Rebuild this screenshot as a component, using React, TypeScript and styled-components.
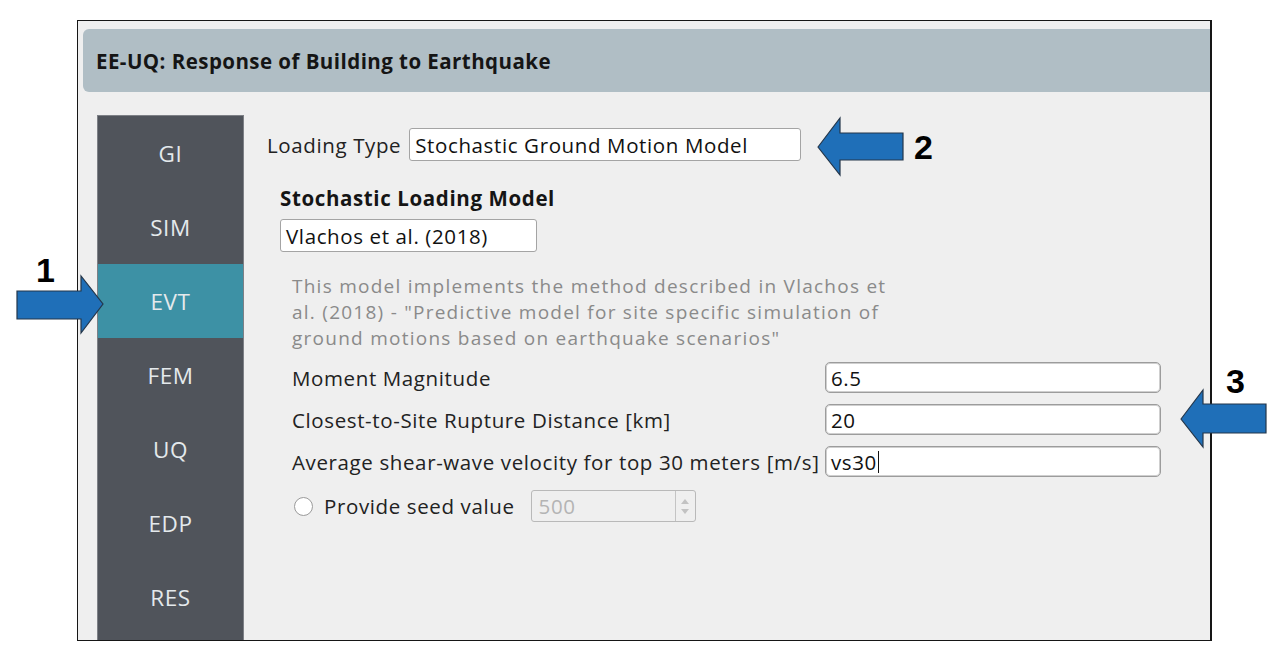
import React from "react";
import styled, { createGlobalStyle } from "styled-components";

const Global = createGlobalStyle`
  html, body { margin: 0; padding: 0; background: #ffffff; }
  body { font-family: "Open Sans", "Noto Sans", "DejaVu Sans", sans-serif; }
  * { box-sizing: border-box; }
`;

const Page = styled.div`
  position: relative;
  width: 1277px;
  height: 661px;
  padding: 20px 0 0 77px;
  overflow: hidden;
`;

const Window = styled.div`
  width: 1135px;
  height: 621px;
  border: 1px solid #161616;
  border-right-width: 2px;
  background: #efefef;
  display: flex;
  flex-direction: column;
  overflow: hidden;
`;

const TitleBar = styled.div`
  margin: 8px 0 0 5px;
  height: 63px;
  background: #b0bec5;
  border-radius: 6px 0 0 6px;
  display: flex;
  align-items: center;
  padding-left: 13px;
  font-size: 20.5px;
  font-weight: 700;
  letter-spacing: 0.45px;
  color: #151515;
`;

const Body = styled.div`
  flex: 1;
  display: flex;
  margin-top: 23px;
  min-height: 0;
`;

const SideNav = styled.nav`
  width: 147px;
  margin-left: 19px;
  background: #50545b;
  border: 1px solid #7d8086;
  border-bottom: none;
  display: flex;
  flex-direction: column;
`;

const NavItem = styled.div<{ $active?: boolean }>`
  height: 74px;
  flex: 0 0 74px;
  display: flex;
  align-items: center;
  justify-content: center;
  background: ${(p) => (p.$active ? "#3d91a5" : "transparent")};
  color: #e4e9ec;
  font-size: 22.5px;
  letter-spacing: 0.6px;
`;

const Content = styled.div`
  flex: 1;
  padding: 13px 0 0 23px;
  color: #222;
  font-size: 20.5px;
  letter-spacing: 0.62px;
`;

const LoadingRow = styled.div`
  display: flex;
  align-items: center;
  gap: 8px;
`;

const Label = styled.span`
  white-space: nowrap;
`;

const TextBox = styled.div<{ $w: number; $h?: number; $thick?: boolean }>`
  width: ${(p) => p.$w}px;
  height: ${(p) => p.$h ?? 32}px;
  background: #fff;
  border: 1px solid ${(p) => (p.$thick ? "#9c9c9c" : "#a4a4a4")};
  box-shadow: ${(p) => (p.$thick ? "inset 0 0 0 1px #cfcfcf" : "none")};
  border-radius: ${(p) => (p.$thick ? 5 : 3)}px;
  display: flex;
  align-items: center;
  padding-left: 5px;
  color: #111;
  white-space: nowrap;
  overflow: hidden;
`;

const Section = styled.div`
  padding-left: 13px;
`;

const SectionTitle = styled.div`
  margin-top: 25px;
  font-weight: 700;
  line-height: 24px;
  color: #151515;
`;

const ModelBox = styled(TextBox)`
  margin-top: 9px;
`;

const Details = styled.div`
  padding-left: 12px;
`;

const Description = styled.p`
  margin: 21px 0 0 0;
  color: #8a8a8a;
  font-size: 19px;
  line-height: 26px;
  letter-spacing: 1.25px;
`;

const DescLine = styled.span`
  display: block;
  white-space: nowrap;
`;

const ParamGrid = styled.div`
  margin-top: 11px;
  display: grid;
  grid-template-columns: 533px 336px;
  row-gap: 11px;
  align-items: center;
`;

const Caret = styled.span`
  display: inline-block;
  width: 1px;
  height: 22px;
  background: #111;
  margin-left: 1px;
`;

const SeedRow = styled.div`
  margin-top: 13px;
  display: flex;
  align-items: center;
  height: 32px;
`;

const Radio = styled.span`
  width: 19px;
  height: 19px;
  border-radius: 50%;
  border: 1px solid #9a9a9a;
  background: #fff;
  margin: 0 11px 0 2px;
`;

const SpinBox = styled.div`
  margin-left: 16px;
  width: 165px;
  height: 32px;
  border: 1px solid #b9b9b9;
  border-radius: 3px;
  display: flex;
  background: #efefef;
`;

const SpinValue = styled.div`
  flex: 1;
  display: flex;
  align-items: center;
  padding-left: 7px;
  color: #b4b4b4;
`;

const SpinButtons = styled.div`
  width: 20px;
  border-left: 1px solid #c4c4c4;
  display: flex;
  flex-direction: column;
  align-items: center;
  justify-content: center;
  gap: 5px;
`;

const Annotation = styled.svg`
  position: absolute;
  overflow: visible;
  pointer-events: none;
`;

const Callout = styled.div<{ $x: number; $y: number }>`
  position: absolute;
  left: ${(p) => p.$x}px;
  top: ${(p) => p.$y}px;
  font-family: "Liberation Sans", Arial, sans-serif;
  font-weight: 700;
  font-size: 34px;
  line-height: 34px;
  color: #000;
`;

const navItems = ["GI", "SIM", "EVT", "FEM", "UQ", "EDP", "RES"];

const params = [
  { label: "Moment Magnitude", value: "6.5" },
  { label: "Closest-to-Site Rupture Distance [km]", value: "20" },
  { label: "Average shear-wave velocity for top 30 meters [m/s]", value: "vs30", caret: true },
];

const descLines = [
  "This model implements the method described in Vlachos et",
  'al. (2018) - "Predictive model for site specific simulation of',
  'ground motions based on earthquake scenarios"',
];

const ArrowShape = ({ points }: { points: string }) => (
  <Annotation width="1277" height="661" style={{ left: 0, top: 0 }}>
    <polygon points={points} fill="#1f6fb8" stroke="#24364a" strokeWidth="1.2" strokeLinejoin="miter" />
  </Annotation>
);

export default function App() {
  return (
    <>
      <Global />
      <Page>
        <Window>
          <TitleBar>EE-UQ: Response of Building to Earthquake</TitleBar>
          <Body>
            <SideNav>
              {navItems.map((n) => (
                <NavItem key={n} $active={n === "EVT"}>
                  {n}
                </NavItem>
              ))}
            </SideNav>
            <Content>
              <LoadingRow>
                <Label>Loading Type</Label>
                <TextBox $w={392} $h={33}>Stochastic Ground Motion Model</TextBox>
              </LoadingRow>
              <Section>
                <SectionTitle>Stochastic Loading Model</SectionTitle>
                <ModelBox $w={257} $h={33}>Vlachos et al. (2018)</ModelBox>
                <Details>
                  <Description>
                    {descLines.map((l) => (
                      <DescLine key={l}>{l}</DescLine>
                    ))}
                  </Description>
                  <ParamGrid>
                    {params.map((p) => (
                      <React.Fragment key={p.label}>
                        <Label>{p.label}</Label>
                        <TextBox $w={336} $h={31} $thick>
                          {p.value}
                          {p.caret && <Caret />}
                        </TextBox>
                      </React.Fragment>
                    ))}
                  </ParamGrid>
                  <SeedRow>
                    <Radio />
                    <Label>Provide seed value</Label>
                    <SpinBox>
                      <SpinValue>500</SpinValue>
                      <SpinButtons>
                        <svg width="8" height="5" viewBox="0 0 8 5">
                          <path d="M0 5 L4 0 L8 5 Z" fill="#c2c2c2" />
                        </svg>
                        <svg width="8" height="5" viewBox="0 0 8 5">
                          <path d="M0 0 L4 5 L8 0 Z" fill="#c2c2c2" />
                        </svg>
                      </SpinButtons>
                    </SpinBox>
                  </SeedRow>
                </Details>
              </Section>
            </Content>
          </Body>
        </Window>

        <ArrowShape points="17,291 81,291 81,276 103,304 81,333 81,319 17,319" />
        <ArrowShape points="818,147 840,118 840,133 903,133 903,160 840,160 840,175" />
        <ArrowShape points="1181,419 1203,390 1203,404 1266,404 1266,433 1203,433 1203,447" />

        <Callout $x={36} $y={253}>1</Callout>
        <Callout $x={914} $y={130}>2</Callout>
        <Callout $x={1226} $y={364}>3</Callout>
      </Page>
    </>
  );
}
